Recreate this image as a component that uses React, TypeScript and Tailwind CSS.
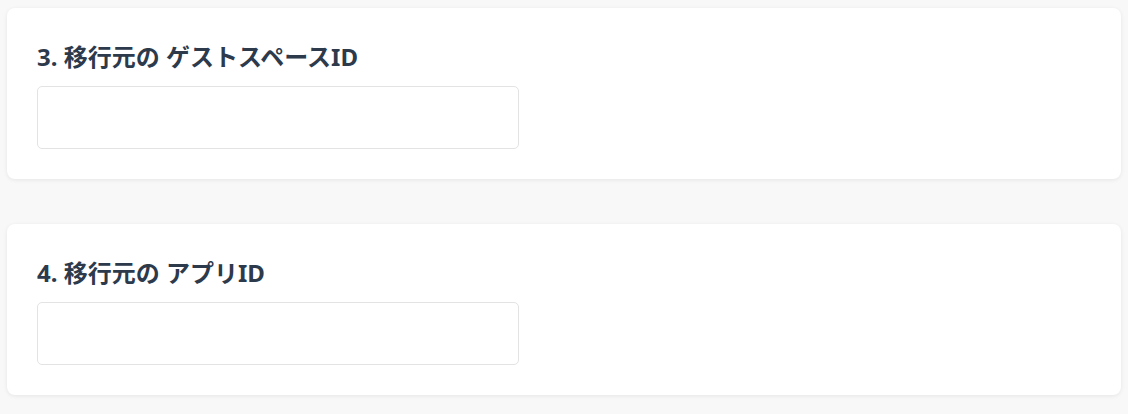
import React from 'react';

const fields = ['3. 移行元の ゲストスペースID', '4. 移行元の アプリID'];

function FieldCard({ label }: { label: string }) {
  return (
    <div className="bg-white rounded-lg shadow-[0_1px_4px_rgba(0,0,0,0.08)] px-[30px] pt-[33px] pb-[30px]">
      <label className="block text-[24px] leading-[32px] font-bold text-[#2d3a4b]">{label}</label>
      <input
        type="text"
        className="mt-[13px] block w-[482px] h-[63px] rounded-[5px] border border-[#e3e3e3] bg-white px-3 outline-none"
      />
    </div>
  );
}

export default function App() {
  return (
    <div
      className="min-h-[414px] bg-[#f8f8f8] px-[7px] pt-[8px] pb-[18px] flex flex-col gap-[45px]"
      style={{ fontFamily: '"Noto Sans", "Noto Sans CJK JP", sans-serif' }}
    >
      {fields.map((f) => (
        <FieldCard key={f} label={f} />
      ))}
    </div>
  );
}
